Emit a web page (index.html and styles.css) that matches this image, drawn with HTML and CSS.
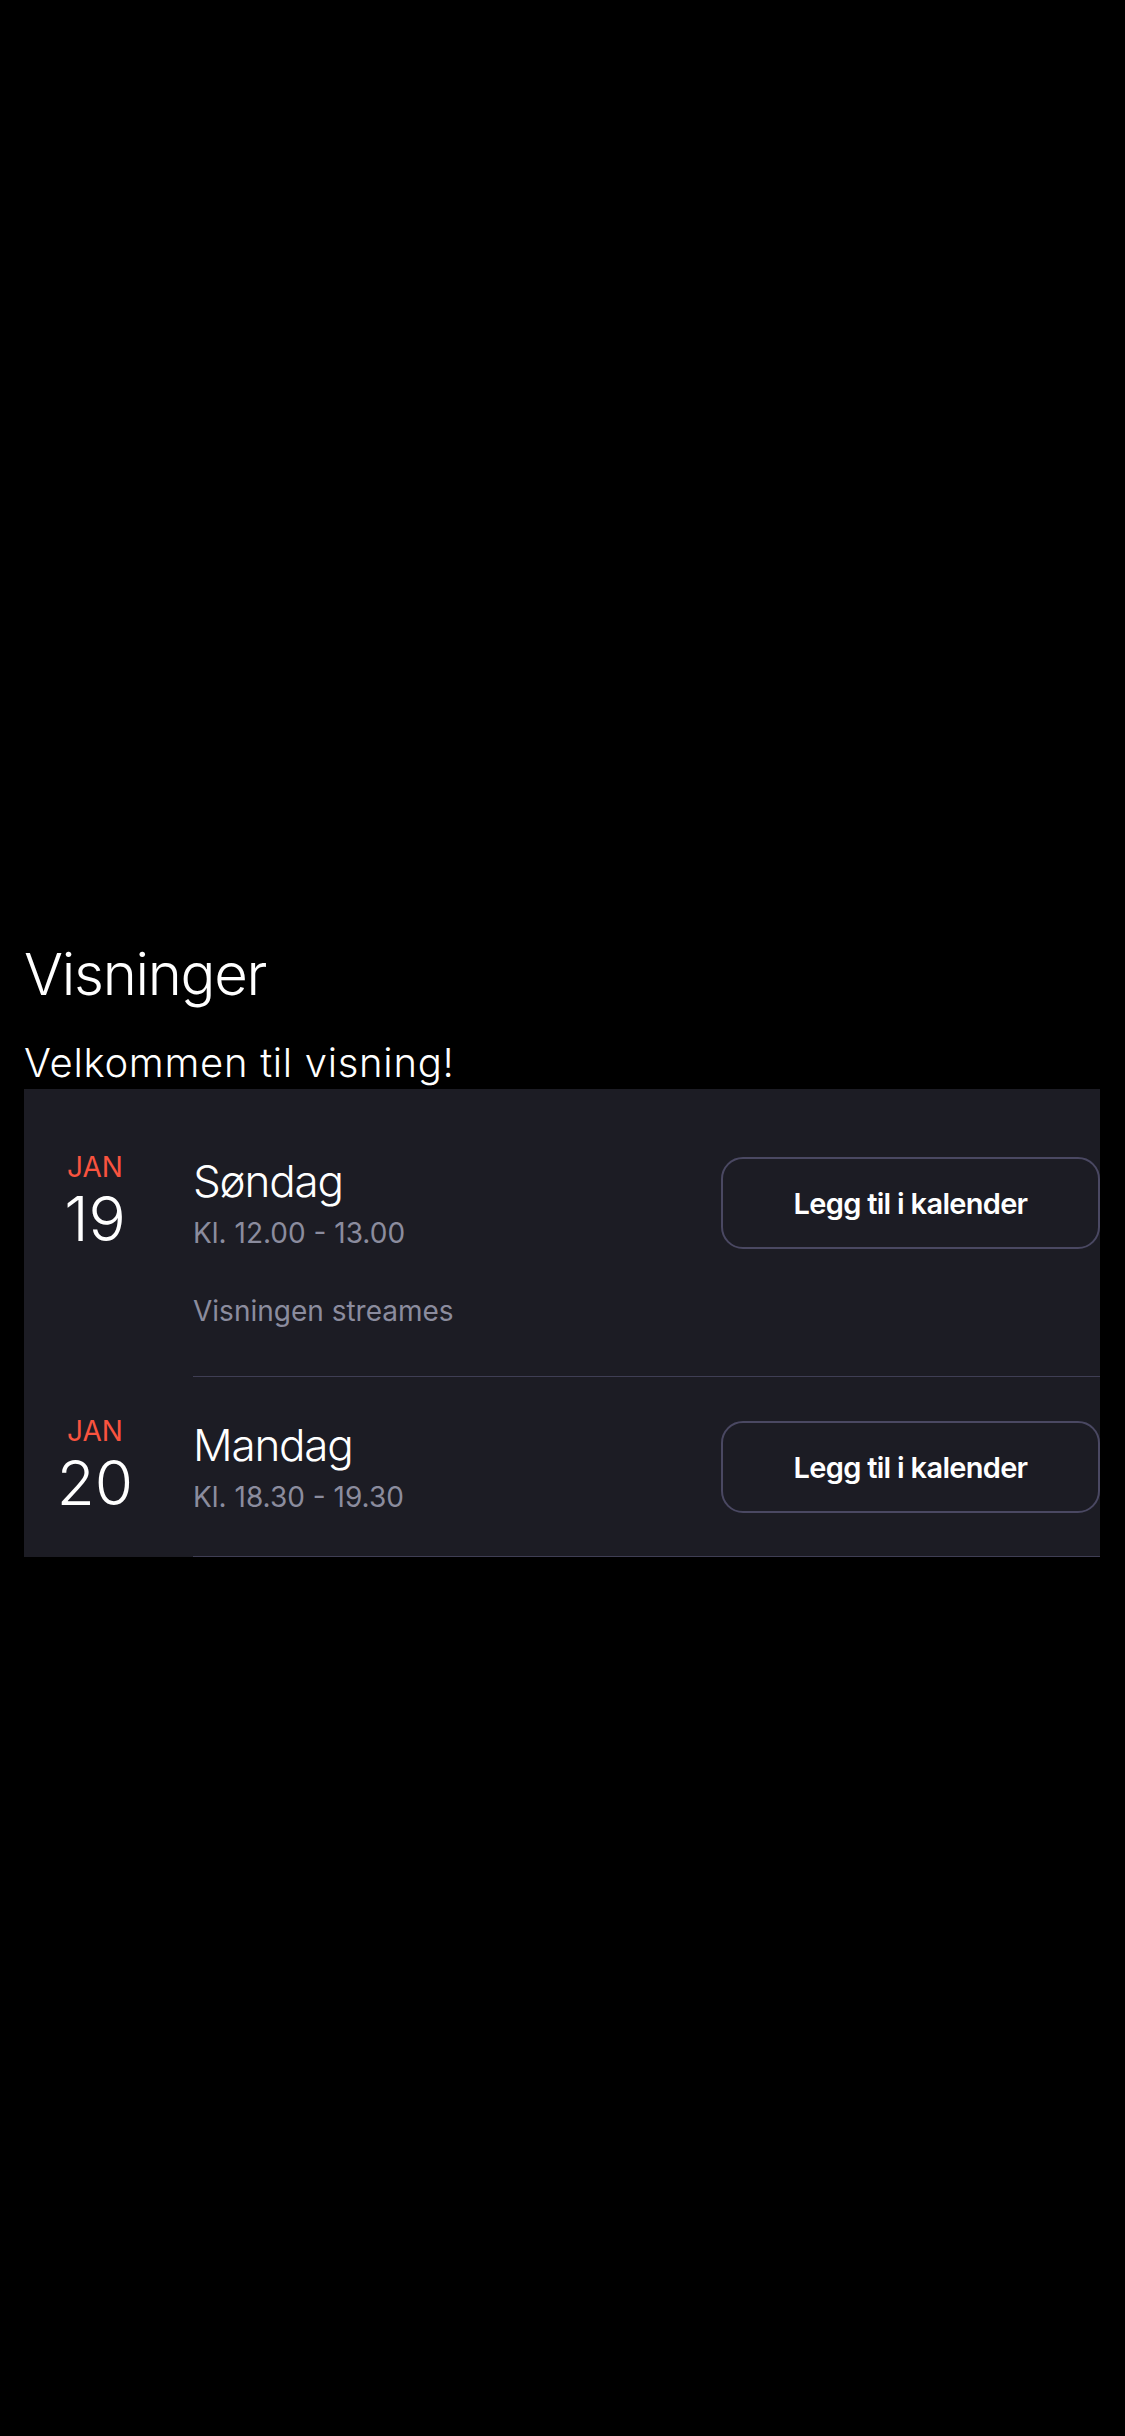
FILE: index.html
```html
<!DOCTYPE html>
<html lang="no">
<head>
<meta charset="utf-8">
<title>Visninger</title>
<link rel="stylesheet" href="styles.css">
</head>
<body>
<div class="media"></div>
<section class="viewings">
  <h2 class="title">Visninger</h2>
  <p class="subtitle">Velkommen til visning!</p>
  <div class="card">
    <div class="row">
      <div class="date"><span class="month">JAN</span><span class="day">19</span></div>
      <div class="main">
        <div class="info">
          <div class="weekday">Søndag</div>
          <div class="time">Kl. 12.00 - 13.00</div>
          <div class="note">Visningen streames</div>
        </div>
        <button class="cal-btn" type="button">Legg til i kalender</button>
      </div>
    </div>
    <div class="row">
      <div class="date"><span class="month">JAN</span><span class="day">20</span></div>
      <div class="main">
        <div class="info">
          <div class="weekday">Mandag</div>
          <div class="time">Kl. 18.30 - 19.30</div>
        </div>
        <button class="cal-btn" type="button">Legg til i kalender</button>
      </div>
    </div>
  </div>
</section>
</body>
</html>
```

FILE: styles.css
```css
html, body {
  margin: 0;
  padding: 0;
  background: #000;
}
body {
  min-height: 2436px;
  font-family: Inter, "Noto Sans", "Liberation Sans", sans-serif;
  color: #fff;
}
.media {
  height: 939px;
}
.viewings {
  padding: 0 25px 0 24px;
}
.title {
  margin: 0;
  font-size: 58px;
  line-height: 70px;
  font-weight: 300;
  letter-spacing: -1.3px;
}
.subtitle {
  margin: 30px 0 2px;
  font-size: 40px;
  line-height: 48px;
  font-weight: 300;
  letter-spacing: 0.7px;
}
.card {
  background: #1c1c24;
  padding-top: 24px;
}
.row {
  display: flex;
}
.date {
  width: 94px;
  margin-left: 24px;
  margin-right: 51px;
  padding-top: 36px;
  display: flex;
  flex-direction: column;
  align-items: center;
  flex: none;
}
.month {
  font-size: 28px;
  line-height: 36px;
  color: #f9533f;
  font-weight: 400;
}
.day {
  margin-top: 2px;
  font-size: 62px;
  line-height: 64px;
  font-weight: 300;
}
.main {
  flex: 1;
  display: flex;
  justify-content: space-between;
  align-items: flex-start;
  padding: 36px 0 41px;
  border-bottom: 1px solid #3f3e54;
}
.info {
  margin-top: 6px;
}
.weekday {
  font-size: 44px;
  line-height: 52px;
  font-weight: 300;
  letter-spacing: -1.2px;
}
.time,
.note {
  font-size: 28px;
  line-height: 36px;
  color: #8b8c9e;
  font-weight: 400;
}
.time {
  margin-top: 8px;
}
.note {
  margin-top: 42px;
  margin-bottom: 6px;
}
.cal-btn {
  margin-top: 8px;
  width: 379px;
  height: 92px;
  box-sizing: border-box;
  border: 2px solid #4a4862;
  border-radius: 22px;
  background: transparent;
  color: #fff;
  font-family: Inter, "Noto Sans", sans-serif;
  font-size: 29px;
  font-weight: 600;
  letter-spacing: -0.7px;
  padding: 0;
}
```
